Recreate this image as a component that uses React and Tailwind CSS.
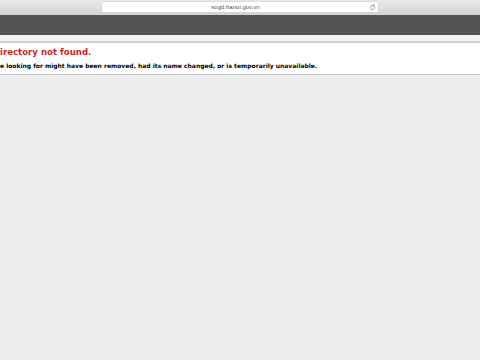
import React from 'react';

// Reload glyph for the address bar
function Reload() {
  return (
    <svg width="7" height="7" viewBox="0 0 16 16" fill="none" stroke="#8a8a8a" strokeWidth="1.8" strokeLinecap="round">
      <path d="M13 8a5 5 0 1 1-1.6-3.7" />
      <path d="M11.8 1.6v3.2H8.6" />
    </svg>
  );
}

export default function App() {
  return (
    <div className="w-[480px] h-[360px] overflow-hidden bg-[#ededed] flex flex-col font-['DejaVu_Sans',Verdana,sans-serif]">
      {/* Browser toolbar */}
      <div className="h-[15px] shrink-0 bg-gradient-to-b from-[#e9e9e9] to-[#d3d3d3] flex items-start pt-[2px] pl-[102px]">
        <div className="w-[276px] h-[10px] bg-white rounded-[2px] shadow-[0_0_0_0.5px_#d0d0d0] flex items-center">
          <span className="flex-1 text-center text-[6px] leading-none text-[#555] font-['Liberation_Sans',Arial,sans-serif] pl-[2px]">sogd.hanoi.gov.vn</span>
          <span className="w-[10px] flex items-center justify-center mr-[1px]"><Reload /></span>
        </div>
      </div>

      {/* Dark header band */}
      <div className="h-[20px] shrink-0 bg-[#545454]" />
      <div className="h-[8px] shrink-0 bg-[#f2f2f2] border-b-2 border-[#cfcfcf]" />

      {/* Error message */}
      <div className="bg-white border-b border-[#c4c4c4] pt-[3px] pb-[4px] whitespace-nowrap">
        <h2 className="text-[8.6px] leading-[13px] font-bold text-[#cc1f1f]">irectory not found.</h2>
        <h3 className="mt-[3px] text-[6px] leading-[8px] font-bold text-black">e looking for might have been removed, had its name changed, or is temporarily unavailable.</h3>
      </div>
    </div>
  );
}
